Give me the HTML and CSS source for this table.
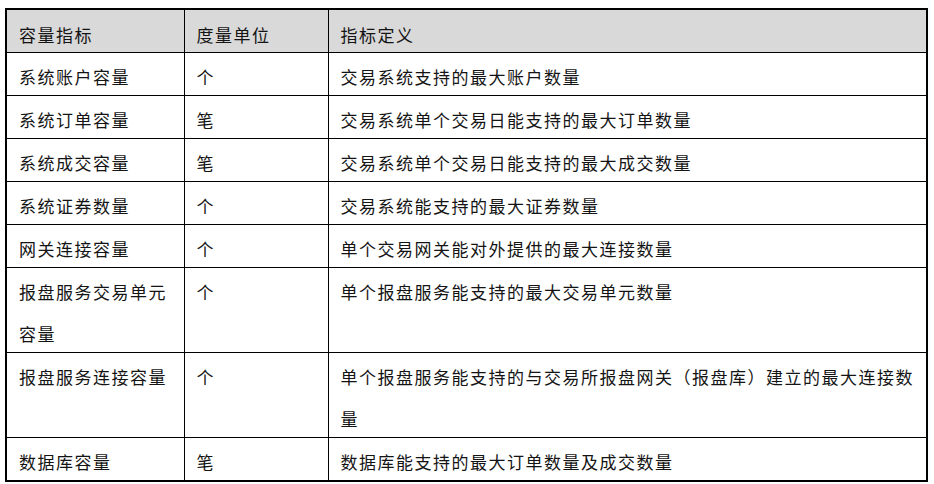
FILE: index.html
```html
<!DOCTYPE html>
<html lang="zh-CN">
<head>
<meta charset="utf-8">
<title>容量指标</title>
<link rel="stylesheet" href="styles.css">
</head>
<body>
<table class="spec">
  <colgroup>
    <col class="c1">
    <col class="c2">
    <col class="c3">
  </colgroup>
  <thead>
    <tr><th><span class="t">容量指标</span></th><th><span class="t">度量单位</span></th><th><span class="t">指标定义</span></th></tr>
  </thead>
  <tbody>
    <tr><td><span class="t">系统账户容量</span></td><td><span class="t">个</span></td><td><span class="t">交易系统支持的最大账户数量</span></td></tr>
    <tr><td><span class="t">系统订单容量</span></td><td><span class="t">笔</span></td><td><span class="t">交易系统单个交易日能支持的最大订单数量</span></td></tr>
    <tr><td><span class="t">系统成交容量</span></td><td><span class="t">笔</span></td><td><span class="t">交易系统单个交易日能支持的最大成交数量</span></td></tr>
    <tr><td><span class="t">系统证券数量</span></td><td><span class="t">个</span></td><td><span class="t">交易系统能支持的最大证券数量</span></td></tr>
    <tr><td><span class="t">网关连接容量</span></td><td><span class="t">个</span></td><td><span class="t">单个交易网关能对外提供的最大连接数量</span></td></tr>
    <tr><td><span class="t">报盘服务交易单元容量</span></td><td><span class="t">个</span></td><td><span class="t">单个报盘服务能支持的最大交易单元数量</span></td></tr>
    <tr><td><span class="t">报盘服务连接容量</span></td><td><span class="t">个</span></td><td><span class="t">单个报盘服务能支持的与交易所报盘网关（报盘库）建立的最大连接数量</span></td></tr>
    <tr><td><span class="t">数据库容量</span></td><td><span class="t">笔</span></td><td><span class="t">数据库能支持的最大订单数量及成交数量</span></td></tr>
  </tbody>
</table>
</body>
</html>
```
FILE: styles.css
```css
html, body {
  margin: 0;
  padding: 0;
  background: #ffffff;
}
body {
  padding: 8px 0 0 5px;
  font-family: "Noto Sans CJK SC", "Noto Sans", sans-serif;
  color: #141414;
}
.spec {
  border-collapse: collapse;
  width: 921px;
  table-layout: fixed;
  border: 2px solid #000;
}
.c1 { width: 178px; }
.c2 { width: 144px; }
.c3 { width: 599px; }
.spec th,
.spec td {
  border: 1px solid #000;
  padding: 0 4px 0 12px;
  font-size: 17px;
  font-weight: 400;
  letter-spacing: 1.5px;
  line-height: 42px;
  height: 43px;
  box-sizing: border-box;
  text-align: left;
  vertical-align: top;
}
.spec .t {
  line-height: 28px;
  vertical-align: -3px;
}
.spec thead th .t {
  vertical-align: -4px;
}
.spec thead th {
  background: #d9d9d9;
}
```
